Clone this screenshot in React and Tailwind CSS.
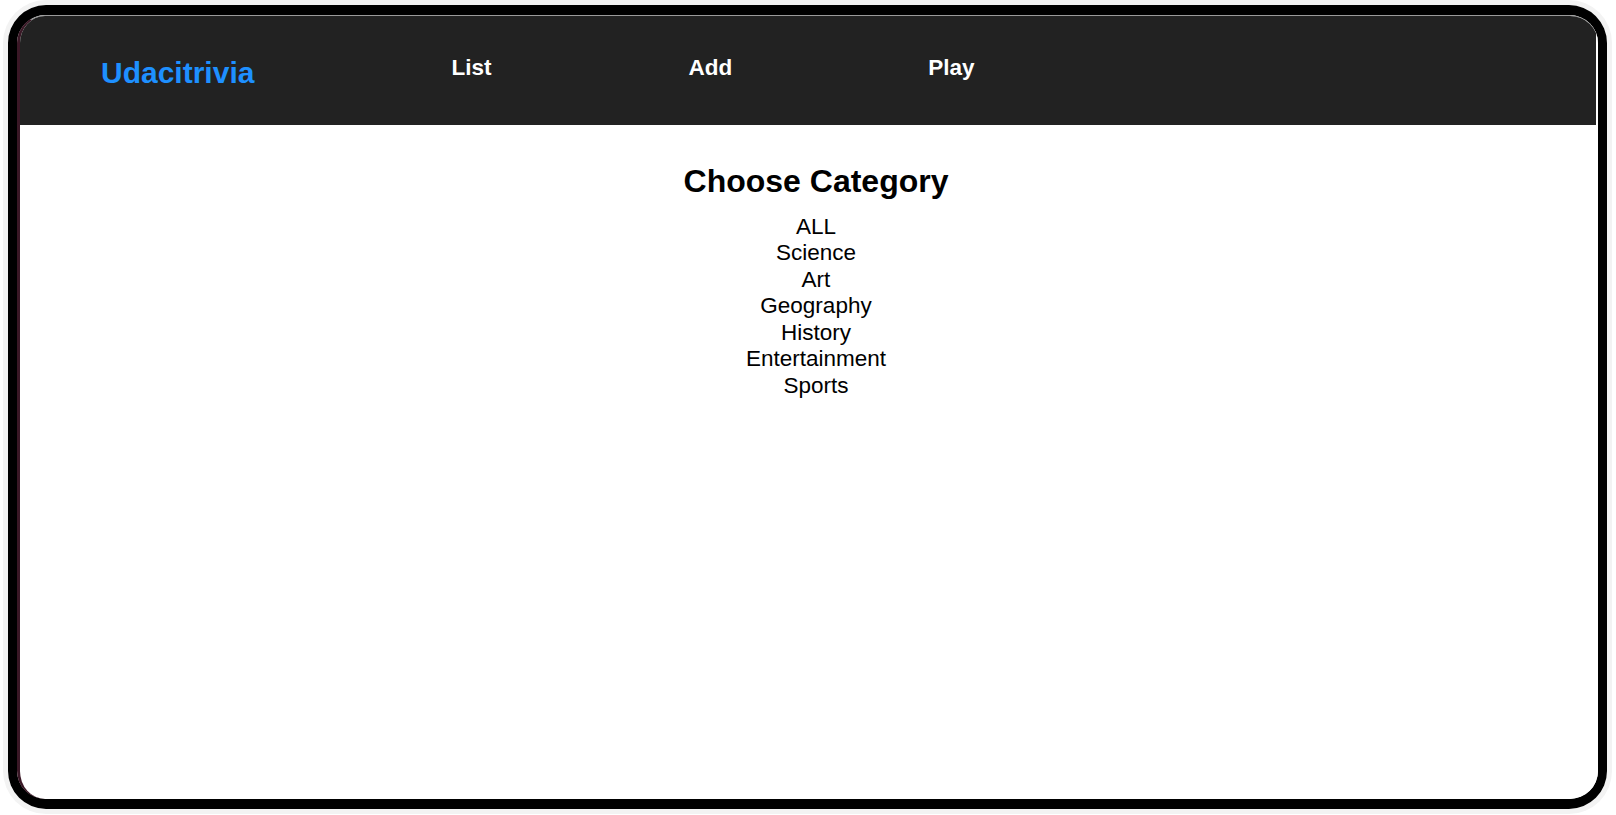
export default function App() {
  const categorias = ['ALL', 'Science', 'Art', 'Geography', 'History', 'Entertainment', 'Sports'];

  return (
    <div className="h-[815px] w-full overflow-hidden bg-white font-['Liberation_Sans',Arial,sans-serif]">
      {/* Marco del dispositivo */}
      <div className="ml-[8px] mt-[5px] h-[804px] w-[1599px] rounded-[38px] border-[9px] border-t-[10px] border-b-[10px] border-black shadow-[0_0_0_5px_#f3f3f3]">
        <div className="flex h-full flex-col overflow-hidden rounded-[28px] border-l-[3px] border-t border-l-[#3a1826] border-t-[#9a9a9a] bg-white">
          {/* Header */}
          <header className="mr-[2px] flex h-[109px] shrink-0 items-start bg-[#222222]">
            <h1 className="ml-[81px] mt-[42px] text-[30px] font-bold leading-none text-[#1e90ff]">Udacitrivia</h1>
            <h2 className="ml-[197px] mt-[41px] text-[22.5px] font-bold leading-none text-white">List</h2>
            <h2 className="ml-[197px] mt-[41px] text-[22.5px] font-bold leading-none text-white">Add</h2>
            <h2 className="ml-[196px] mt-[41px] text-[22.5px] font-bold leading-none text-white">Play</h2>
          </header>

          {/* Elegir categoría */}
          <div className="flex flex-col items-center pl-[14px] pt-[40px] text-black">
            <div className="text-[32px] font-bold leading-none">Choose Category</div>
            <div className="mt-[17px] flex flex-col items-center">
              {categorias.map((cat) => (
                <div key={cat} className="cursor-pointer text-[22.5px] leading-[26.45px]">
                  {cat}
                </div>
              ))}
            </div>
          </div>
        </div>
      </div>
    </div>
  );
}
